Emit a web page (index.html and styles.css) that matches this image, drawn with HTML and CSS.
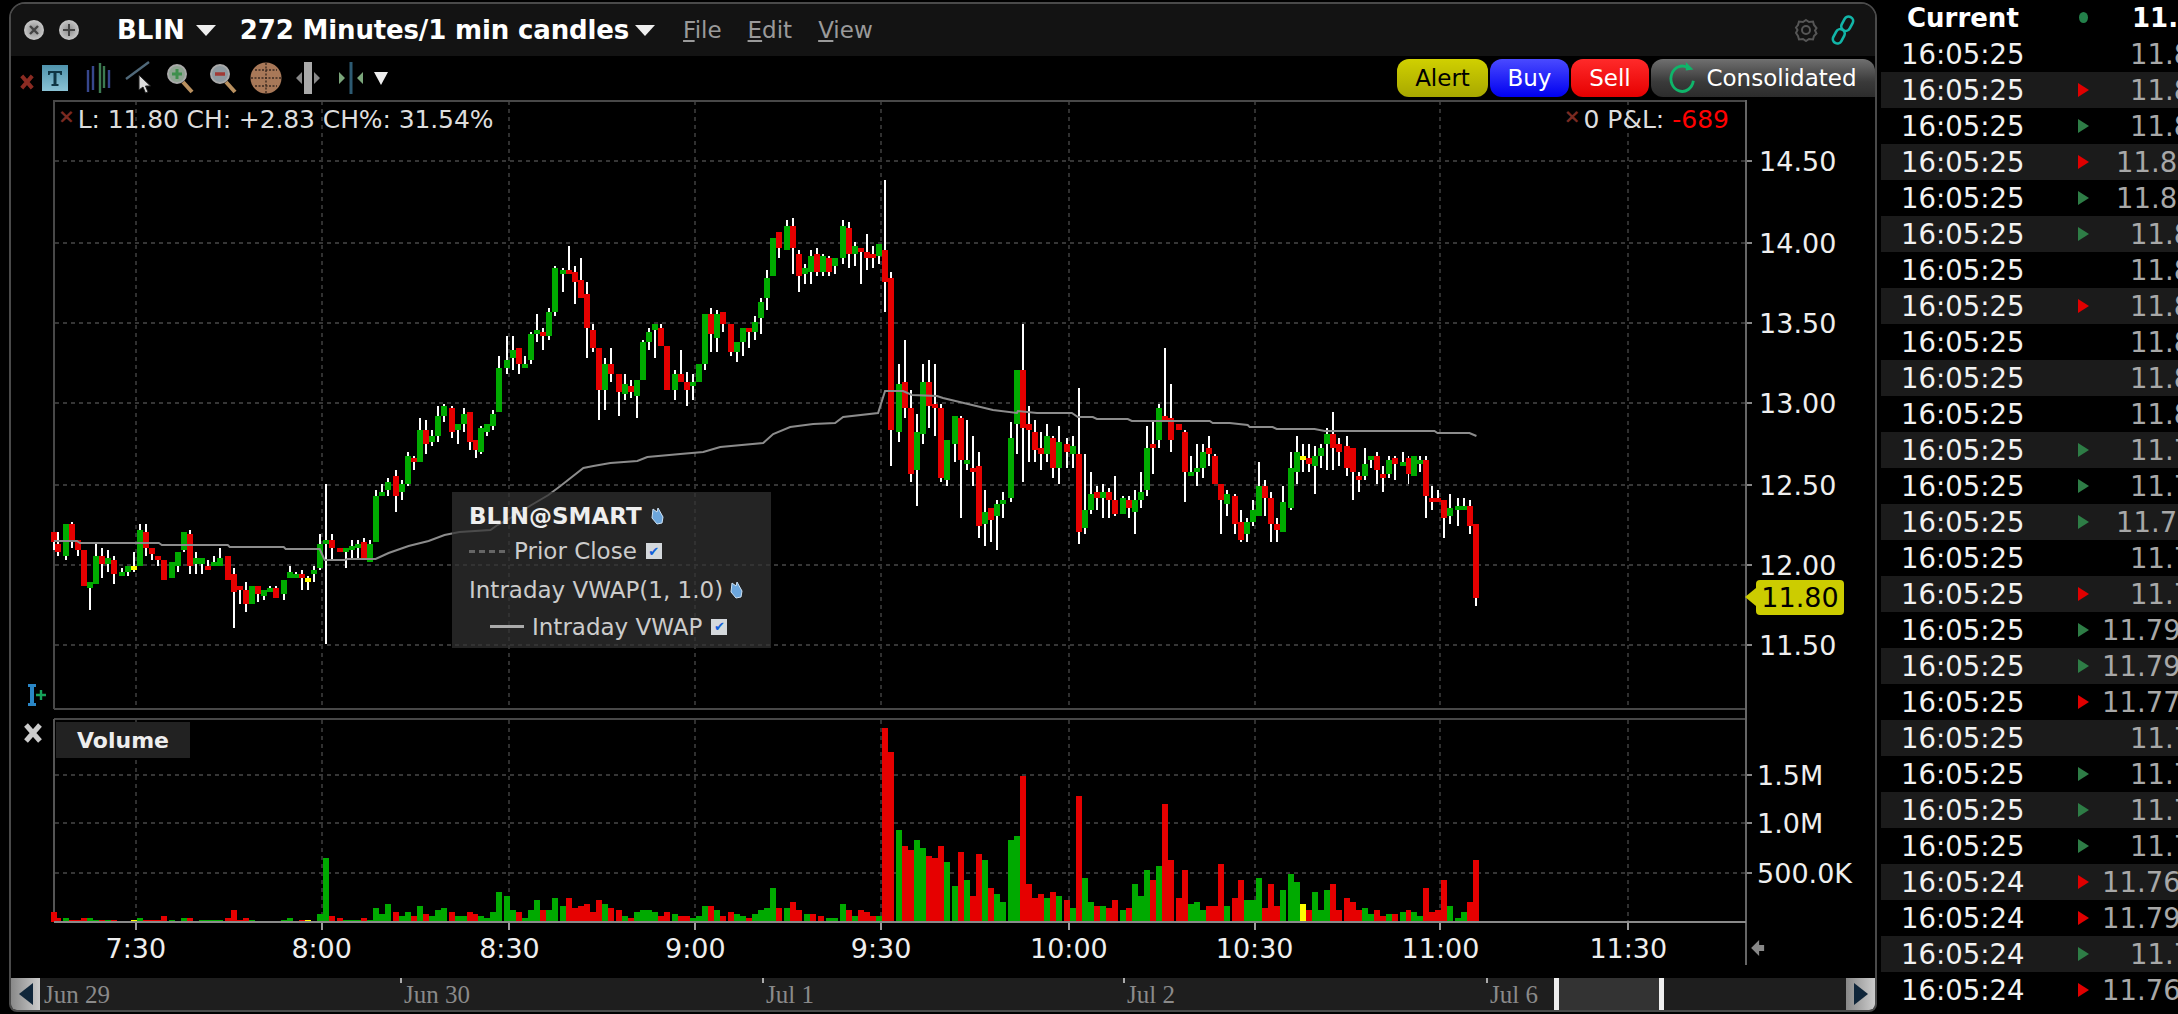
FILE: index.html
```html
<!DOCTYPE html>
<html lang="en">
<head>
<meta charset="utf-8">
<title>BLIN chart</title>
<link rel="stylesheet" href="styles.css">
</head>
<body>
<main class="desk">
  <section class="window">
    <header class="titlebar">
      <svg class="winbtn" viewBox="0 0 22 22"><defs><radialGradient id="gb"><stop offset="0" stop-color="#8a8a8a"/><stop offset="1" stop-color="#c8c8c8"/></radialGradient></defs><circle cx="11" cy="11" r="10" fill="url(#gb)"/><path d="M7 7l8 8M15 7l-8 8" stroke="#444" stroke-width="2.4"/></svg>
      <svg class="winbtn" viewBox="0 0 22 22"><circle cx="11" cy="11" r="10" fill="url(#gb)"/><path d="M11 5v12M5 11h12" stroke="#444" stroke-width="2"/></svg>
      <span class="symbol">BLIN</span>
      <span class="caret caret-a"></span>
      <span class="symbol period">272 Minutes/1 min candles</span>
      <span class="caret caret-b"></span>
      <nav class="menu"><span><u>F</u>ile</span><span><u>E</u>dit</span><span><u>V</u>iew</span></nav>
      <svg class="gear" viewBox="0 0 24 24"><path d="M12 2l3 2 4-.5 1 3.5 2.500 3-1.500 2.500 1.500 3-2.500 2.500-1 3.500-4-.5-3 2-3-2-4 .5-1-3.500L2 15l1.500-3L2 9.500 4 7l1-3.500 4 .5z" fill="none" stroke="#555" stroke-width="2"/><circle cx="12" cy="12" r="4" fill="none" stroke="#555" stroke-width="2"/></svg>
      <svg class="link" viewBox="0 0 24 30"><g fill="none" stroke="#12b5a8" stroke-width="2.600"><rect x="12" y="1" width="9" height="15" rx="4.500" transform="rotate(28 16 8)"/><rect x="3" y="14" width="9" height="15" rx="4.500" transform="rotate(28 8 22)"/></g></svg>
    </header>

    <div class="toolbar">
      <svg class="tool tool-x" viewBox="0 0 16 20"><path d="M2 3l12 14M14 3L2 17" stroke="#8a2b22" stroke-width="4.500"/></svg>
      <svg class="tool tool-t" viewBox="0 0 26 26"><defs><linearGradient id="tg" x1="0" y1="0" x2="0" y2="1"><stop offset="0" stop-color="#4f93ac"/><stop offset="1" stop-color="#8ac2d4"/></linearGradient></defs><rect width="26" height="26" fill="url(#tg)"/><path d="M6 6h14v4h-1.500l-1-2H14.500v11h2v2h-7v-2h2V8H8.500l-1 2H6z" fill="#0f3644"/></svg>
      <svg class="tool tool-bars" viewBox="0 0 26 32"><g stroke-width="2.400" fill="none"><path d="M3 8v22" stroke="#37478d"/><path d="M8 4v24" stroke="#37478d"/><path d="M15 1v30" stroke="#3d7b52"/><path d="M19 4v22" stroke="#3d7b52"/><path d="M24 8v18" stroke="#37478d"/></g></svg>
      <svg class="tool tool-draw" viewBox="0 0 26 34"><path d="M1 18L24 1" stroke="#50697a" stroke-width="2.400"/><path d="M14 14v15l4-3 2.500 6 2.500-1-2.500-6h5z" fill="#ddd" stroke="#222"/></svg>
      <svg class="tool tool-zoom" viewBox="0 0 28 32"><path d="M17 20l9 10" stroke="#b9905f" stroke-width="4"/><circle cx="11" cy="12" r="9" fill="#8fa592" stroke="#aaa" stroke-width="2"/><path d="M11 7v10M6 12h10" stroke="#3f8f4d" stroke-width="3"/></svg>
      <svg class="tool tool-zoom" viewBox="0 0 28 32"><path d="M17 20l9 10" stroke="#b9905f" stroke-width="4"/><circle cx="11" cy="12" r="9" fill="#8f9aa0" stroke="#aaa" stroke-width="2"/><path d="M6 12h10" stroke="#a23a35" stroke-width="3.400"/></svg>
      <svg class="tool tool-globe" viewBox="0 0 32 32"><circle cx="16" cy="16" r="15.500" fill="#a87858"/><path d="M16 1v30M1 16h30M5 8h22M5 24h22" stroke="#3b2a20" stroke-width="1.400" stroke-dasharray="2 1.500" fill="none"/></svg>
      <svg class="tool tool-split" viewBox="0 0 26 32"><path d="M1 16l6-6v12zM25 16l-6-6v12z" fill="#888"/><rect x="9" y="0" width="8" height="32" fill="#aaa"/></svg>
      <svg class="tool tool-move" viewBox="0 0 26 32"><path d="M1 10l6 6-6 6zM25 10l-6 6 6 6z" fill="#7ba67b"/><path d="M13 0v32" stroke="#2d5a72" stroke-width="3"/></svg>
      <span class="caret caret-c"></span>
      <div class="actions">
        <button class="act act-alert">Alert</button>
        <button class="act act-buy">Buy</button>
        <button class="act act-sell">Sell</button>
        <button class="act act-cons">
          <svg class="spin" viewBox="0 0 28 34"><path d="M19 6A12 13.500 0 1 0 25 20" fill="none" stroke="#0fb56a" stroke-width="3"/><path d="M17 0v9l8-1z" fill="#0fb56a"/></svg>
          Consolidated
        </button>
      </div>
    </div>

    <div class="chart">
      <svg id="plot" class="plot" viewBox="10 100 1866 878" preserveAspectRatio="none" xmlns="http://www.w3.org/2000/svg"></svg>
      <p class="readout"><span class="kill">×</span>L: 11.80 CH: +2.83 CH%: 31.54%</p>
      <p class="pnl"><span class="kill">×</span>0 P&amp;L: <b>-689</b></p>
      <div class="legend">
        <div class="lg-row lg-title">BLIN@SMART <svg class="wrench" viewBox="0 0 14 18"><path d="M2 2l4 3 1-4 5 9-1 6-5 1-5-6z" fill="#6ca6dc" stroke="#cfe3f5"/></svg></div>
        <div class="lg-row"><span class="dash"></span>Prior Close <span class="check">✔</span></div>
        <div class="lg-row lg-study">Intraday VWAP(1, 1.0) <svg class="wrench" viewBox="0 0 14 18"><path d="M2 2l4 3 1-4 5 9-1 6-5 1-5-6z" fill="#6ca6dc" stroke="#cfe3f5"/></svg></div>
        <div class="lg-row lg-sub"><span class="solid"></span>Intraday VWAP <span class="check">✔</span></div>
      </div>
      <svg class="pane-tool" viewBox="0 0 24 24"><path d="M6 1h8v3h-2v16h2v3H6v-3h2V4H6z" fill="#2a86c6"/><path d="M14 12h10M19 7v10" stroke="#16a35a" stroke-width="2.400"/></svg>
      <svg class="vol-close" viewBox="0 0 18 20"><path d="M2 2l14 16M16 2L2 18" stroke="#ccc" stroke-width="5"/></svg>
      <span class="vol-tag">Volume</span>
      <span class="price-tag">11.80</span>
    </div>

    <footer class="scroller">
      <span class="sbtn"><i class="arrow arrow-l"></i></span>
      <span class="date date-a">Jun 29</span>
      <span class="date date-b">Jun 30</span>
      <span class="date date-c">Jul 1</span>
      <span class="date date-d">Jul 2</span>
      <span class="date date-e">Jul 6</span>
      <span class="thumb"></span>
      <span class="rest"></span>
      <span class="sbtn"><i class="arrow arrow-r"></i></span>
    </footer>
  </section>

  <aside class="ticks">
    <div class="tick head"><span>Current</span><i class="dot"></i><span class="p p-s">11.80</span></div>
    <div class="tick"><span>16:05:25</span><i></i><span class="p p-s">11.80</span></div>
    <div class="tick"><span>16:05:25</span><i class="dn"></i><span class="p p-s">11.80</span></div>
    <div class="tick"><span>16:05:25</span><i class="up"></i><span class="p p-s">11.80</span></div>
    <div class="tick"><span>16:05:25</span><i class="dn"></i><span class="p p-m">11.80</span></div>
    <div class="tick"><span>16:05:25</span><i class="up"></i><span class="p p-m">11.80</span></div>
    <div class="tick"><span>16:05:25</span><i class="up"></i><span class="p p-s">11.80</span></div>
    <div class="tick"><span>16:05:25</span><i></i><span class="p p-s">11.80</span></div>
    <div class="tick"><span>16:05:25</span><i class="dn"></i><span class="p p-s">11.80</span></div>
    <div class="tick"><span>16:05:25</span><i></i><span class="p p-s">11.80</span></div>
    <div class="tick"><span>16:05:25</span><i></i><span class="p p-s">11.80</span></div>
    <div class="tick"><span>16:05:25</span><i></i><span class="p p-s">11.80</span></div>
    <div class="tick"><span>16:05:25</span><i class="up"></i><span class="p p-s">11.79</span></div>
    <div class="tick"><span>16:05:25</span><i class="up"></i><span class="p p-s">11.79</span></div>
    <div class="tick"><span>16:05:25</span><i class="up"></i><span class="p p-m">11.79</span></div>
    <div class="tick"><span>16:05:25</span><i></i><span class="p p-s">11.79</span></div>
    <div class="tick"><span>16:05:25</span><i class="dn"></i><span class="p p-s">11.79</span></div>
    <div class="tick"><span>16:05:25</span><i class="up"></i><span class="p p-l">11.79</span></div>
    <div class="tick"><span>16:05:25</span><i class="up"></i><span class="p p-l">11.79</span></div>
    <div class="tick"><span>16:05:25</span><i class="dn"></i><span class="p p-l">11.77</span></div>
    <div class="tick"><span>16:05:25</span><i></i><span class="p p-s">11.77</span></div>
    <div class="tick"><span>16:05:25</span><i class="up"></i><span class="p p-s">11.77</span></div>
    <div class="tick"><span>16:05:25</span><i class="up"></i><span class="p p-s">11.77</span></div>
    <div class="tick"><span>16:05:25</span><i class="up"></i><span class="p p-s">11.77</span></div>
    <div class="tick"><span>16:05:24</span><i class="dn"></i><span class="p p-l">11.76</span></div>
    <div class="tick"><span>16:05:24</span><i class="dn"></i><span class="p p-l">11.79</span></div>
    <div class="tick"><span>16:05:24</span><i class="up"></i><span class="p p-s">11.79</span></div>
    <div class="tick"><span>16:05:24</span><i class="dn"></i><span class="p p-l">11.76</span></div>
  </aside>
</main>
<script src="chart.js"></script>
</body>
</html>
```

FILE: styles.css
```css
* { box-sizing: border-box; }
html, body { margin: 0; height: 100%; background: #000; overflow: hidden; }
body { font-family: "DejaVu Sans", sans-serif; color: #eee; }

.desk { display: flex; height: 1014px; width: 2178px; background: #000; }

/* chart window */
.window {
  width: 1868px;
  height: 1010px;
  margin: 2px 0 0 9px;
  border: 2px solid #4a4a4a;
  border-radius: 16px 16px 8px 8px;
  display: flex;
  flex-direction: column;
  overflow: hidden;
  flex: none;
}
.titlebar {
  height: 52px;
  flex: none;
  background: #131313;
  display: flex;
  align-items: center;
  padding: 0 18px 0 12px;
}
.winbtn { width: 22px; height: 22px; margin-right: 13px; }
.symbol { font-weight: 700; font-size: 26px; color: #fff; margin-left: 24px; white-space: nowrap; }
.period { margin-left: 24px; letter-spacing: -.15px; }
.caret { width: 0; height: 0; border-left: 10px solid transparent; border-right: 10px solid transparent; border-top: 11px solid #eee; }
.caret-a { margin-left: 11px; }
.caret-b { margin-left: 6px; }
.menu { display: flex; gap: 26px; font-size: 23px; color: #9a9a9a; margin-left: 28px; }
.gear { width: 24px; height: 24px; margin-left: auto; }
.link { width: 28px; height: 30px; margin-left: 11px; }

.toolbar {
  height: 44px;
  flex: none;
  background: #000;
  display: flex;
  align-items: center;
  padding-left: 9px;
}
.tool { flex: none; display: block; }
.tool-x { width: 14px; height: 18px; margin-top: 8px; }
.tool-t { width: 26px; height: 26px; margin-left: 8px; }
.tool-bars { width: 26px; height: 32px; margin-left: 17px; }
.tool-draw { width: 26px; height: 34px; margin-left: 14px; }
.tool-zoom { width: 28px; height: 32px; margin-left: 15px; }
.tool-globe { width: 32px; height: 32px; margin-left: 13px; }
.tool-split { width: 26px; height: 32px; margin-left: 13px; }
.tool-move { width: 26px; height: 32px; margin-left: 17px; }
.caret-c { margin-left: 10px; border-left-width: 7px; border-right-width: 7px; border-top-width: 13px; }
.actions { display: flex; margin-left: auto; height: 38px; gap: 2px; padding-right: 0; }
.act {
  font: 23px "DejaVu Sans", sans-serif;
  border: 0;
  border-radius: 12px;
  padding: 0;
  height: 38px;
  color: #fff;
  display: flex;
  align-items: center;
  justify-content: center;
}
.act-alert { width: 91px; color: #000; background: linear-gradient(#d0d000, #a8a800); }
.act-buy { width: 79px; background: linear-gradient(#4a4aff, #0000f0); }
.act-sell { width: 78px; background: linear-gradient(#ff2a2a, #e60000); }
.act-cons { width: 224px; gap: 9px; background: linear-gradient(#707070, #3a3a3a 60%, #2c2c2c); border-radius: 12px 12px 0 12px; }
.spin { width: 28px; height: 32px; }

/* plot area */
.chart { position: relative; flex: 1; min-height: 0; background: #000; }
.plot { display: block; width: 100%; height: 100%; }
.plot text { font-family: "DejaVu Sans", sans-serif; font-size: 27px; fill: #eee; }
.plot .vol-axis { font-size: 27px; }

.readout, .pnl { position: absolute; margin: 0; font-size: 25px; color: #ddd; white-space: nowrap; top: 4px; }
.readout { left: 47px; letter-spacing: -.1px; }
.pnl { right: 146px; }
.pnl b { font-weight: 400; color: #f00; }
.kill { color: #7a2a22; font-weight: 700; font-size: 20px; margin-right: 3px; vertical-align: 5px; }

.legend {
  position: absolute;
  left: 441px;
  top: 392px;
  width: 319px;
  height: 156px;
  background: rgba(50, 50, 50, .72);
  padding: 9px 0 0 17px;
  font-size: 23px;
  color: #ccc;
}
.lg-row { display: flex; align-items: center; height: 37px; white-space: nowrap; }
.lg-title { font-weight: 700; font-size: 23px; color: #eee; height: 30px; gap: 9px; }
.lg-row:nth-child(2) { height: 40px; }
.lg-study { gap: 7px; }
.lg-sub { padding-left: 21px; }
.wrench { width: 14px; height: 18px; }
.check {
  display: inline-flex; align-items: center; justify-content: center;
  width: 16px; height: 16px; margin-left: 9px; background: #d4d8dc; color: #1260d8; font-size: 13px;
}
.dash { width: 36px; height: 0; border-top: 3px dashed #666; margin-right: 9px; }
.solid { width: 34px; height: 3px; background: #aaa; margin-right: 8px; }

.pane-tool { position: absolute; left: 11px; top: 583px; width: 24px; height: 24px; }
.vol-close { position: absolute; left: 13px; top: 623px; width: 18px; height: 20px; }
.vol-tag {
  position: absolute; left: 45px; top: 622px; width: 134px; height: 36px;
  background: #222; color: #eee; font-weight: 700; font-size: 22px;
  display: flex; align-items: center; justify-content: center;
}
.price-tag {
  position: absolute; left: 1745px; top: 480px; width: 88px; height: 35px;
  background: #cccc00; color: #000; font-size: 27px; border-radius: 4px;
  display: flex; align-items: center; justify-content: center;
}
.price-tag::before {
  content: ""; position: absolute; left: -11px; top: 8px;
  border-top: 9px solid transparent; border-bottom: 9px solid transparent; border-right: 11px solid #cccc00;
}

/* scroller */
.scroller {
  height: 32px;
  flex: none;
  background: #1e1e1e;
  display: flex;
  font: 25px "Liberation Serif", serif;
  color: #8a8a8a;
}
.sbtn { width: 29px; flex: none; background: linear-gradient(90deg, #888, #ccc); display: flex; align-items: center; justify-content: center; }
.arrow { width: 0; height: 0; border-top: 11px solid transparent; border-bottom: 11px solid transparent; }
.arrow-l { border-right: 14px solid #10263a; }
.arrow-r { border-left: 14px solid #10263a; }
.date { position: relative; flex: none; padding: 3px 0 0 4px; white-space: nowrap; }
.date::before { content: ""; position: absolute; left: 0; top: 0; width: 2px; height: 5px; background: #aaa; }
.date-a { width: 360px; }
.date-a::before { display: none; }
.date-b { width: 362px; }
.date-c { width: 361px; }
.date-d { width: 363px; }
.date-e { width: 68px; }
.thumb { width: 110px; flex: none; background: #333; border-left: 5px solid #eee; border-right: 5px solid #eee; box-shadow: inset 3px 0 #333, inset -3px 0 #333; }
.rest { flex: 1; }

/* time and sales */
.ticks { flex: 1; min-width: 0; margin-left: 4px; overflow: hidden; }
.tick {
  height: 36px;
  display: flex;
  align-items: center;
  padding-left: 20px;
  font-size: 27.500px;
  color: #f2f2f2;
  white-space: nowrap;
  position: relative;
}
.tick:nth-child(odd) { background: #1b1b1b; }
.tick.head { background: #000; font-weight: 700; font-size: 26px; color: #fff; padding-left: 26px; }
.tick i { position: absolute; left: 197px; top: 11px; width: 0; height: 0; }
.tick i.up { border-top: 7px solid transparent; border-bottom: 7px solid transparent; border-left: 11px solid #2e7d46; }
.tick i.dn { border-top: 7px solid transparent; border-bottom: 7px solid transparent; border-left: 11px solid #e00000; }
.tick i.dot { top: 12px; left: 198px; width: 9px; height: 11px; border-radius: 50%; background: #23804a; }
.p { position: absolute; color: #a8a8a8; }
.p-s { left: 249px; }
.p-m { left: 235px; }
.p-l { left: 221px; }
.head .p { color: #fff; left: 251px; }
```

FILE: chart.js
```js
// Candles: colour x,bodyTop,bodyBottom,wickTop,wickBottom (page pixels)
const CANDLES = `r53,532,542,532,550 r57,544,552,532,556 g65,524,556,524,560 r71,524,540,522,548 r77,540,550,540,556
r83,550,586,550,586 g89,582,588,582,610 g95,556,584,544,584 r101,556,564,548,578 g107,558,564,550,572 r113,560,574,556,584
g121,572,576,568,576 g127,566,572,566,576 y133,566,570,552,572 g139,530,566,524,566 r145,532,548,524,556 r151,548,554,548,560
r157,556,560,556,566 r163,560,580,560,580 g171,562,578,562,578 g177,552,566,552,572 g183,532,550,532,552 r189,534,566,530,574
g195,558,564,552,574 g201,558,564,558,574 r207,566,570,560,570 g213,562,566,556,566 g219,558,566,548,566 r227,556,580,556,580
r233,574,592,568,628 r239,586,590,586,604 r245,590,604,582,612 g251,586,604,586,604 r257,586,594,586,602 g263,590,596,590,600
g269,588,592,586,592 r275,588,598,586,598 g283,580,594,580,600 g289,572,578,566,578 g295,574,578,572,578 r301,574,578,570,590
y307,578,582,576,590 g313,570,574,566,582 g319,544,568,534,570 g325,540,544,484,644 r331,540,548,534,560 r339,548,552,548,552
g345,548,552,548,568 g351,546,550,540,560 g357,544,548,540,560 r363,542,558,538,560 g369,544,562,540,562 g375,496,542,490,542
g381,492,496,484,496 g387,482,490,478,496 r395,476,496,470,512 g401,484,492,480,500 g407,456,484,452,486 r413,458,462,456,470
g419,430,462,418,462 r425,430,444,420,454 g431,436,442,430,446 g437,416,436,406,442 g443,406,416,404,422 r451,408,432,406,438
g457,424,430,424,444 g463,414,424,408,432 r469,412,442,412,450 r475,440,450,440,458 g481,428,452,426,454 g487,424,432,424,436
g493,414,426,410,430 g499,368,412,356,412 g507,360,368,336,374 g513,350,358,336,370 r519,348,364,348,374 g525,364,368,356,368
g531,334,360,332,364 g537,330,334,314,342 r543,332,336,328,350 g549,312,336,308,340 g555,268,312,266,316 g563,270,274,268,292
r569,270,274,246,274 r575,272,282,266,304 r581,280,298,258,298 r587,294,328,282,358 r593,330,348,324,352 r599,348,390,348,420
g605,364,390,358,410 r611,364,374,348,382 r619,374,392,374,416 g625,384,394,374,400 r631,386,392,380,398 g637,380,396,380,418
g643,342,380,340,380 g649,332,342,328,350 g655,324,330,324,358 r661,328,346,324,346 r667,346,390,346,390 g675,374,390,370,400
r681,374,382,350,382 r687,382,390,372,406 g693,382,386,374,400 g699,364,382,364,382 g705,314,364,314,370 r711,314,334,308,352
g717,314,338,310,352 r723,312,324,312,332 r731,324,352,324,356 g737,342,352,342,362 g743,328,342,328,356 r749,328,332,328,348
g755,322,332,316,340 g761,302,318,298,334 g767,278,298,270,310 g773,238,276,238,276 r779,232,248,232,258 g787,226,250,220,250
r793,226,248,218,274 r799,254,276,250,292 g805,268,274,264,284 g811,256,272,250,284 r817,254,272,248,276 g823,256,272,254,276
r829,258,272,256,276 g835,258,266,258,274 g843,226,258,220,264 r849,228,254,222,268 g855,246,254,242,266 r861,248,252,248,284
r867,252,258,234,270 r873,254,258,246,268 g879,244,256,244,264 r885,250,282,180,312 r891,278,430,272,466 g899,384,432,364,442
r905,382,408,340,418 r911,408,474,390,482 g917,432,470,414,506 g923,382,434,364,444 r929,382,406,360,428 r935,404,408,364,436
r941,408,478,404,482 g947,440,480,440,486 g955,416,444,416,462 r961,418,460,416,518 g967,460,464,420,470 r973,468,472,436,486
r979,466,526,452,538 g985,512,524,490,546 r991,508,520,508,542 g997,504,516,500,550 g1003,500,504,492,518 g1011,438,498,422,502
g1017,370,424,370,454 r1023,370,428,324,482 r1029,424,430,406,462 r1035,432,450,420,462 r1041,448,454,432,470 g1047,436,454,424,462
r1053,438,468,436,478 g1059,442,468,426,484 r1067,444,452,438,468 g1073,446,454,436,468 r1079,454,532,388,544 g1085,510,528,454,534
g1091,494,510,472,514 r1097,492,498,486,510 g1103,492,498,484,518 r1109,492,500,488,518 r1115,500,514,476,516 g1123,498,514,496,514
r1129,500,508,496,518 g1135,500,512,490,534 g1141,492,500,472,508 g1147,448,490,426,496 r1153,444,448,422,474 g1159,408,440,404,448
r1165,416,420,348,420 r1171,418,440,384,452 r1179,424,430,424,430 r1185,432,472,430,502 g1191,472,476,456,476 g1197,468,472,444,486
g1203,452,468,444,478 r1209,448,454,436,466 r1215,456,484,454,484 r1221,484,500,484,534 g1227,494,504,490,516 r1235,496,524,494,534
r1241,522,540,510,542 g1247,522,534,518,542 g1253,510,522,500,526 g1259,486,516,462,516 r1265,486,498,480,516 r1271,498,524,492,542
r1277,524,530,518,542 g1283,502,532,486,532 g1291,468,508,452,510 g1297,452,472,436,484 y1303,456,460,444,472 r1309,458,464,444,472
g1315,456,466,446,494 g1321,448,456,444,468 g1327,434,444,428,470 r1333,434,448,412,470 r1339,444,452,438,466 r1347,446,468,436,476
r1353,448,472,448,500 r1359,476,480,472,492 g1365,464,476,448,480 g1371,456,460,456,468 r1377,456,470,452,484 r1383,474,478,466,492
g1389,460,474,456,478 r1395,458,464,456,480 g1403,462,466,452,466 r1409,458,474,456,484 g1415,456,476,456,476 g1421,460,464,456,472
r1427,460,496,456,518 r1433,498,502,486,510 r1439,498,502,490,502 r1445,500,518,500,538 g1451,508,516,494,524 g1459,506,510,498,526
g1465,506,510,498,510 r1471,506,526,500,534 r1477,524,598,524,606`;

// Volume bars: colour x,top
const VOLUME = `r53,912 r57,918 g65,918 r71,920 r77,920 r83,918 g89,918 g95,920 r101,920 g107,920 r113,920 y133,920 g139,918 r145,920 r151,920 r157,920
r163,916 g171,920 g183,918 r189,918 g201,920 g207,920 g213,920 g219,920 r227,918 r233,910 r239,920 r245,918 g251,920 g283,920 g289,918
r301,920 y307,920 g319,914 g325,858 r331,916 r339,918 g345,920 g351,920 g357,920 r363,918 g369,920 g375,908 g381,914 g387,904 r395,912
g401,916 g407,912 r413,916 g419,906 r425,914 g431,916 g437,910 g443,908 r451,912 g457,916 g463,916 r469,912 r475,914 g481,916 g487,918
g493,912 g499,892 g507,896 g513,910 r519,912 g525,918 g531,910 g537,900 r543,910 g549,910 g555,898 g563,906 r569,898 r575,908 r581,906
r587,904 r593,912 r599,900 g605,904 r611,908 r619,910 g625,916 r631,918 g637,912 g643,910 g649,910 g655,912 r661,916 r667,912 g675,914
r681,916 r687,916 g693,918 g699,916 g705,906 r711,906 g717,910 r723,916 r731,912 g737,914 g743,916 r749,918 g755,914 g761,910 g767,908
g773,888 r779,908 g787,908 r793,902 r799,910 g807,914 r813,914 r821,916 g829,918 g835,918 g843,904 r849,910 g855,916 r861,910 r867,912
r873,916 g879,916 r885,728 r891,752 g899,830 r905,846 r911,850 g917,840 g923,848 r929,856 r935,858 r941,846 g947,862 g955,886 r961,852
g967,880 r973,896 r979,854 g985,860 r991,888 g997,894 g1003,902 g1011,840 g1017,836 r1023,776 r1029,884 r1035,898 r1041,894 g1047,898
r1053,892 g1059,896 r1067,900 g1073,908 r1079,796 g1085,878 g1091,902 r1097,906 g1103,906 r1109,908 r1115,900 g1123,910 r1129,908
g1135,884 g1141,896 g1147,870 r1153,880 g1159,866 r1165,804 r1171,860 r1179,898 r1185,870 g1191,904 g1197,902 g1203,910 r1209,906
r1215,906 r1221,864 g1227,906 r1235,898 r1241,880 g1247,900 g1253,900 g1259,878 r1265,908 r1271,884 r1277,906 g1283,890 g1291,874
g1297,882 y1303,904 r1309,910 g1315,892 g1321,910 g1327,890 r1333,884 r1339,910 r1347,898 r1353,902 r1359,910 g1365,908 g1371,914
r1377,910 r1383,916 g1389,914 r1395,914 g1403,912 r1409,910 g1415,912 g1421,916 r1427,888 r1433,912 r1439,910 r1445,880 g1451,906
g1459,918 g1465,912 r1471,902 r1477,860`;

const VWAP = [[53,541],[76,541],[79,543],[158,543],[161,545],[227,545],[229,547],[283,547],[285,549],[319,549],[324,560],[344,560],
[347,559],[375,559],[388,553],[408,546],[428,541],[444,535],[459,532],[490,530],[497,525],[510,518],[531,505],[548,495],[560,486],
[583,468],[593,466],[610,463],[637,461],[647,457],[680,454],[703,452],[720,447],[763,443],[773,434],[790,427],[813,424],[835,423],
[843,417],[878,413],[885,391],[903,391],[912,395],[937,396],[943,398],[993,410],[1017,413],[1018,411],[1037,413],[1072,413],[1078,417],
[1093,417],[1097,419],[1128,419],[1132,421],[1210,421],[1213,423],[1230,423],[1248,425],[1250,427],[1273,427],[1277,429],[1315,429],
[1325,431],[1435,431],[1438,433],[1470,433],[1477,436]];

const COLORS = { g: "#00aa00", r: "#e60000", y: "#ffff00" };
const PRICE_LEVELS = [[161, "14.50"], [243, "14.00"], [323, "13.50"], [403, "13.00"], [485, "12.50"], [565, "12.00"], [645, "11.50"]];
const VOLUME_LEVELS = [[775, "1.5M"], [823, "1.0M"], [873, "500.0K"]];
const TIMES = [[135, "7:30"], [321, "8:00"], [509, "8:30"], [695, "9:00"], [881, "9:30"], [1069, "10:00"], [1255, "10:30"], [1441, "11:00"], [1629, "11:30"]];

const parse = (s) => s.trim().split(/\s+/).map((t) => [t[0], ...t.slice(1).split(",").map(Number)]);
const plot = document.getElementById("plot");
const parts = [];
const rect = (x, y, w, h, fill) => parts.push(`<rect x="${x}" y="${y}" width="${w}" height="${h}" fill="${fill}" shape-rendering="crispEdges"/>`);
const line = (x1, y1, x2, y2, stroke, dash) => parts.push(`<line x1="${x1}" y1="${y1}" x2="${x2}" y2="${y2}" stroke="${stroke}" stroke-width="2"${dash ? ` stroke-dasharray="${dash}"` : ""} shape-rendering="crispEdges"/>`);
const label = (x, y, text, anchor) => parts.push(`<text x="${x}" y="${y}" text-anchor="${anchor || "start"}">${text}</text>`);

// grid
PRICE_LEVELS.forEach(([y]) => { line(54, y, 1747, y, "#363636", "4 4"); line(1747, y, 1753, y, "#888"); });
VOLUME_LEVELS.forEach(([y]) => { line(54, y, 1747, y, "#363636", "4 4"); line(1747, y, 1753, y, "#888"); });
TIMES.forEach(([x]) => {
  line(x, 101, x, 708, "#303030", "4 4");
  line(x, 720, x, 921, "#303030", "4 4");
  line(x, 922, x, 930, "#999");
});

// pane frames
line(53, 101, 1747, 101, "#484848");
line(53, 709, 1747, 709, "#484848");
line(53, 719, 1747, 719, "#484848");
line(53, 100, 53, 709, "#484848");
line(53, 719, 53, 922, "#555");
line(1747, 100, 1747, 965, "#666");

// candles: wicks underneath the bodies
const candles = parse(CANDLES);
candles.forEach(([, x, , , hi, lo]) => rect(x - 1, hi, 2, lo - hi, "#fff"));
candles.forEach(([c, x, top, bot]) => rect(x - 3, top, 6, bot - top, COLORS[c]));
parts.push(`<polyline points="${VWAP.map((p) => p.join(",")).join(" ")}" fill="none" stroke="#8c8c8c" stroke-width="2"/>`);

// volume
parse(VOLUME).forEach(([c, x, top]) => rect(x - 3, top, 6, 922 - top, COLORS[c]));
line(53, 922, 1747, 922, "#8a8a8a");

// axis labels
PRICE_LEVELS.forEach(([y, t]) => label(1760, y + 10, t));
VOLUME_LEVELS.forEach(([y, t]) => label(1758, y + 10, t));
TIMES.forEach(([x, t]) => label(x, 958, t, "middle"));
parts.push('<path d="M1752 948l8-8v5h5v6h-5v5z" fill="#888"/>');

plot.innerHTML = parts.join("");
```
